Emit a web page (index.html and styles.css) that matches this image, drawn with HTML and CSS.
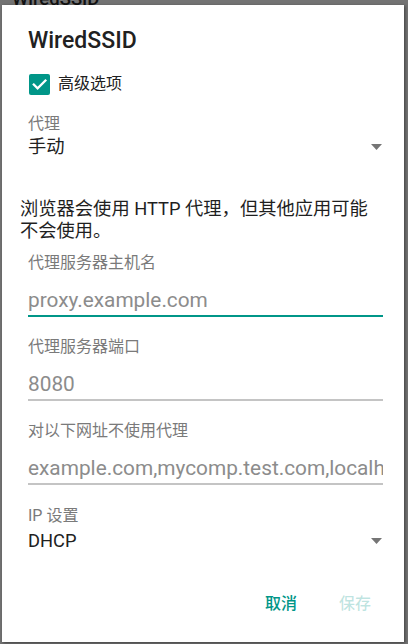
FILE: index.html
```html
<!DOCTYPE html>
<html lang="zh-CN">
<head>
<meta charset="utf-8">
<title>WiredSSID</title>
<link rel="stylesheet" href="styles.css">
</head>
<body>
<div class="screen">
  <div class="screen-title">WiredSSID</div>
</div>
<div class="dialog">
  <h1 class="dialog-title">WiredSSID</h1>
  <div class="check-row">
    <span class="checkbox">
      <svg width="21" height="21" viewBox="0 0 21 21"><path d="M4.8 10.6 L8.6 14.4 L16.4 6.6" fill="none" stroke="#ffffff" stroke-width="2.3" stroke-linecap="square"/></svg>
    </span>
    <span class="check-label">高级选项</span>
  </div>
  <div class="field-label label-proxy">代理</div>
  <div class="spinner">
    <span class="spinner-value">手动</span>
    <svg class="arrow" width="11" height="6" viewBox="0 0 11 6"><polygon points="0,0 11,0 5.5,6" fill="#757575"/></svg>
  </div>
  <p class="message">浏览器会使用 HTTP 代理<span class="punct">，</span>但其他应用可能不会使用。</p>
  <div class="field field-first">
    <div class="field-label">代理服务器主机名</div>
    <div class="input">proxy.example.com</div>
    <div class="underline underline-focused"></div>
  </div>
  <div class="field">
    <div class="field-label">代理服务器端口</div>
    <div class="input">8080</div>
    <div class="underline"></div>
  </div>
  <div class="field">
    <div class="field-label">对以下网址不使用代理</div>
    <div class="input">example.com,mycomp.test.com,localhost</div>
    <div class="underline"></div>
  </div>
  <div class="field-label label-ip">IP 设置</div>
  <div class="spinner spinner-ip">
    <span class="spinner-value">DHCP</span>
    <svg class="arrow" width="11" height="6" viewBox="0 0 11 6"><polygon points="0,0 11,0 5.5,6" fill="#757575"/></svg>
  </div>
  <div class="actions">
    <span class="btn">取消</span>
    <span class="btn btn-disabled">保存</span>
  </div>
</div>
</body>
</html>
```
FILE: styles.css
```css
html, body {
  margin: 0;
  padding: 0;
}
body {
  width: 408px;
  height: 644px;
  overflow: hidden;
  background: #737373;
  font-family: Roboto, "Noto Sans CJK SC", sans-serif;
  position: relative;
}
.screen {
  height: 0;
}
.screen-title {
  margin-top: -11px;
  padding-left: 12px;
  font-size: 18.5px;
  line-height: 20px;
  font-weight: 500;
  color: #121212;
}
.dialog {
  position: absolute;
  top: 5px;
  left: 2px;
  width: 402px;
  box-sizing: border-box;
  padding: 22px 21px 20px 26px;
  background: #ffffff;
  box-shadow: 1px 1px 3px rgba(0, 0, 0, 0.45);
  color: rgba(0, 0, 0, 0.87);
}
.dialog-title {
  margin: 0;
  font-size: 23px;
  line-height: 28px;
  font-weight: 500;
  color: #212121;
}
.check-row {
  margin-top: 14px;
  height: 30px;
  display: flex;
  align-items: center;
}
.checkbox {
  width: 21px;
  height: 21px;
  margin-left: 1px;
  border-radius: 2px;
  background: #009688;
  display: flex;
}
.check-label {
  margin-left: 8px;
  font-size: 16px;
  line-height: 30px;
  color: #212121;
}
.field-label {
  font-size: 16px;
  line-height: 20px;
  color: #7a7a7a;
  white-space: nowrap;
}
.label-proxy {
  margin-top: 15px;
}
.spinner {
  height: 26px;
  display: flex;
  align-items: center;
  justify-content: space-between;
}
.spinner-value {
  font-size: 18.3px;
  line-height: 26px;
  color: #212121;
}
.arrow {
  display: block;
  margin-right: 1px;
}
.message {
  margin: 36px 5px 0 -8px;
  font-size: 18.3px;
  line-height: 22px;
  color: #1f1f1f;
}
.punct {
  font-family: "Noto Sans CJK TC", sans-serif;
}
.field {
  margin-top: 20px;
}
.field-first {
  margin-top: 11px;
}
.input {
  margin-top: 13px;
  font-size: 20.8px;
  line-height: 28px;
  color: #8c8c8c;
  white-space: nowrap;
  overflow: hidden;
}
.underline {
  margin-top: 1px;
  height: 2px;
  background: #c4c4c4;
}
.underline-focused {
  background: #009688;
}
.label-ip {
  margin-top: 21px;
}
.spinner-ip {
  margin-top: 2px;
}
.actions {
  margin-top: 32px;
  height: 36px;
  display: flex;
  justify-content: flex-end;
  align-items: center;
  column-gap: 42px;
  padding-right: 12px;
}
.btn {
  font-size: 16px;
  line-height: 36px;
  font-weight: 500;
  color: #009688;
}
.btn-disabled {
  color: rgba(0, 150, 136, 0.26);
}
```
